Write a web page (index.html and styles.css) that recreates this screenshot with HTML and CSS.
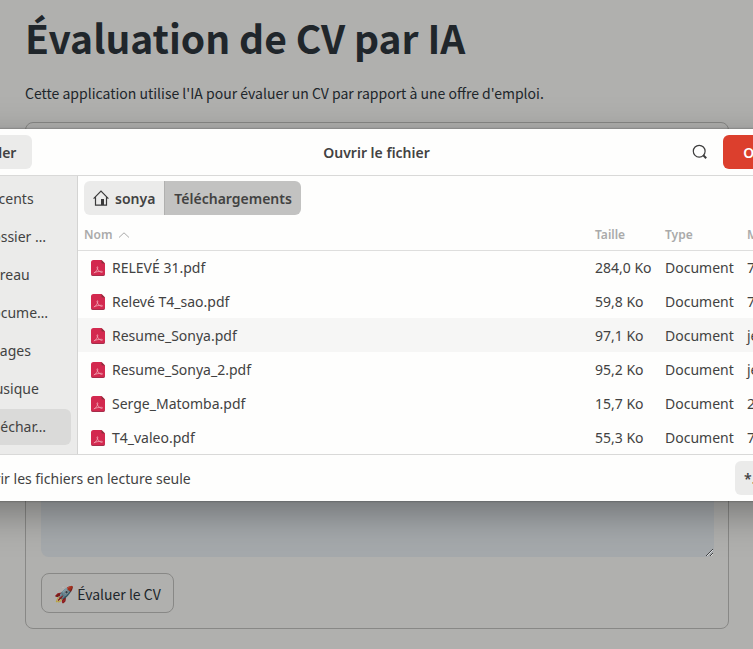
FILE: index.html
```
<!DOCTYPE html>
<html lang="fr">
<head>
<meta charset="utf-8">
<title>Évaluation de CV par IA</title>
<link rel="stylesheet" href="styles.css">
</head>
<body>
<main class="page">
  <h1 class="page-title">Évaluation de CV par IA</h1>
  <p class="intro">Cette application utilise l'IA pour évaluer un CV par rapport à une offre d'emploi.</p>
  <form class="cv-form">
    <textarea class="offer" aria-label="Offre d'emploi"></textarea>
    <button class="submit" type="button"><span class="rocket">🚀</span> Évaluer le CV</button>
  </form>
</main>

<section class="dialog" role="dialog" aria-labelledby="dialog-title">
  <header class="dialog-header">
    <button class="btn" type="button">Annuler</button>
    <h2 class="dialog-title" id="dialog-title">Ouvrir le fichier</h2>
    <div class="header-actions">
      <button class="search" type="button" aria-label="Rechercher">
        <svg width="16" height="16" viewBox="0 0 16 16" fill="none" stroke="#3d3d3d"><circle cx="7.2" cy="7.2" r="5.9" stroke-width="1.2"/><path d="M11.3 11.3 14.2 14.2" stroke-width="2"/></svg>
      </button>
      <button class="btn btn-open" type="button">Ouvrir</button>
    </div>
  </header>
  <div class="dialog-body">
    <nav class="places">
      <a class="place" href="#">Récents</a>
      <a class="place" href="#">Dossier …</a>
      <a class="place" href="#">Bureau</a>
      <a class="place" href="#">Docume…</a>
      <a class="place" href="#">Images</a>
      <a class="place" href="#">Musique</a>
      <a class="place place-current" href="#">Téléchar…</a>
    </nav>
    <div class="browser">
      <div class="path">
        <button class="crumb" type="button">
          <svg width="16" height="16" viewBox="0 0 16 16" fill="none" stroke="#3a3a3a" stroke-width="1.2"><path d="M.6 8.6 8 1.2l7.4 7.4M2.5 7.2v7.9h11V7.2"/><path d="M8 9h3v6H8z" fill="#3a3a3a" stroke="none"/></svg>
          sonya</button>
        <button class="crumb crumb-current" type="button">Téléchargements</button>
      </div>
      <table class="files">
        <thead>
          <tr><th class="name">Nom <svg class="sort" width="12" height="6" viewBox="0 0 12 6" fill="none" stroke="#aaa"><path d="M1 5.5 6 .8l5 4.7"/></svg></th><th class="size">Taille</th><th class="type">Type</th><th>Modifié</th></tr>
        </thead>
        <tbody>
          <tr><td class="name"><svg class="pdf" width="14" height="16" viewBox="0 0 14 16"><use href="#pdf"/></svg>RELEVÉ 31.pdf</td><td>284,0 Ko</td><td>Document</td><td>7</td></tr>
          <tr><td class="name"><svg class="pdf" width="14" height="16" viewBox="0 0 14 16"><use href="#pdf"/></svg>Relevé T4_sao.pdf</td><td>59,8 Ko</td><td>Document</td><td>7</td></tr>
          <tr class="hovered"><td class="name"><svg class="pdf" width="14" height="16" viewBox="0 0 14 16"><use href="#pdf"/></svg>Resume_Sonya.pdf</td><td>97,1 Ko</td><td>Document</td><td>jeu.</td></tr>
          <tr><td class="name"><svg class="pdf" width="14" height="16" viewBox="0 0 14 16"><use href="#pdf"/></svg>Resume_Sonya_2.pdf</td><td>95,2 Ko</td><td>Document</td><td>jeu.</td></tr>
          <tr><td class="name"><svg class="pdf" width="14" height="16" viewBox="0 0 14 16"><use href="#pdf"/></svg>Serge_Matomba.pdf</td><td>15,7 Ko</td><td>Document</td><td>2</td></tr>
          <tr><td class="name"><svg class="pdf" width="14" height="16" viewBox="0 0 14 16"><use href="#pdf"/></svg>T4_valeo.pdf</td><td>55,3 Ko</td><td>Document</td><td>7</td></tr>
        </tbody>
      </table>
    </div>
  </div>
  <footer class="dialog-footer">
    <label class="readonly"><input class="readonly-box" type="checkbox">Ouvrir les fichiers en lecture seule</label>
    <button class="btn btn-filter" type="button">*.pdf</button>
  </footer>
</section>

<svg class="symbols" width="0" height="0" aria-hidden="true">
  <symbol id="pdf" viewBox="0 0 14 16">
    <path d="M2.500 0h8L14 3.500V13.500a2.500 2.500 0 0 1-2.500 2.500h-9A2.500 2.500 0 0 1 0 13.500v-11A2.500 2.500 0 0 1 2.500 0z" fill="#d3294f"/>
    <path d="M10.500 0 14 3.500h-2.200a1.300 1.300 0 0 1-1.300-1.300z" fill="#8f2f3c"/>
    <path d="M0 13.200v.3A2.500 2.500 0 0 0 2.500 16h9a2.500 2.500 0 0 0 2.500-2.500v-.3a2.500 2.500 0 0 1-2.500 2h-9a2.500 2.500 0 0 1-2.500-2z" fill="#96304a"/>
    <path d="M2.800 13c1.800-.5 4-3.400 4-5.600 0-1-.9-.9-.8.1.2 2.100 2.600 4.600 4.600 4.900 1.300.1 1.200-1 0-1.100-2 0-5.600.5-7.300 1.300" fill="none" stroke="#f0a5b4" stroke-width=".8"/>
  </symbol>
</svg>
</body>
</html>
```

FILE: styles.css
```
* {
  box-sizing: border-box;
}

body {
  margin: 0;
  min-height: 100vh;
  overflow: hidden;
  position: relative;
  background: #b0b0ae;
  color: #20262b;
  font-family: "Noto Sans CJK SC", sans-serif;
}

button,
input,
textarea {
  font: inherit;
  color: inherit;
}

.page {
  padding: 9px 24px 20px 25px;
}

.page-title {
  margin: 0;
  font-size: 39px;
  line-height: 56px;
  font-weight: 700;
}

.intro {
  margin: 16px 0 17px;
  font-size: 14px;
  line-height: 24px;
}

.cv-form {
  display: flex;
  flex-direction: column;
  align-items: flex-start;
  gap: 16px;
  padding: 16px 14px 15px 15px;
  border: 1px solid #888886;
  border-radius: 8px;
}

.offer {
  width: 100%;
  height: 418px;
  border: 0;
  border-radius: 8px;
  background: #a5a9ac;
}

.submit {
  height: 40px;
  padding: 0 12px;
  border: 1px solid #888886;
  border-radius: 8px;
  background: transparent;
  font-size: 14px;
  line-height: 20px;
}

.rocket {
  font-size: 16px;
  filter: brightness(0.75);
}

.dialog {
  position: absolute;
  top: 129px;
  left: -60px;
  right: -60px;
  background: #fefefd;
  color: #424242;
  font-family: "Noto Sans", sans-serif;
  font-size: 14px;
  box-shadow: 0 12px 36px rgba(0, 0, 0, 0.34), 0 0 2px rgba(0, 0, 0, 0.4);
}

.dialog-header {
  display: grid;
  grid-template-columns: 1fr auto 1fr;
  align-items: center;
  height: 47px;
  padding: 0 6px;
  border-bottom: 1px solid #d9d9d8;
}

.dialog-title {
  margin: 0;
  font-size: 14px;
  font-weight: 600;
}

.btn {
  justify-self: start;
  height: 34px;
  width: 86px;
  padding: 0 16px;
  border: 0;
  border-radius: 6px;
  background: #ebebea;
  font-size: 14px;
  font-weight: 600;
}

.header-actions {
  display: flex;
  justify-content: flex-end;
  gap: 6px;
}

.search {
  display: grid;
  place-items: center;
  width: 34px;
  height: 34px;
  padding: 0;
  border: 0;
  background: transparent;
}

.btn-open {
  width: 84px;
  background: #dc3f2d;
  color: #fff;
}

.dialog-body {
  display: grid;
  grid-template-columns: 138px 1fr;
}

.places {
  display: flex;
  flex-direction: column;
  gap: 2px;
  padding: 5px 6px;
  background: #ebebea;
  border-right: 1px solid #d4d4d3;
}

.place {
  height: 36px;
  padding-left: 36px;
  border-radius: 6px;
  line-height: 36px;
  color: inherit;
  text-decoration: none;
  white-space: nowrap;
}

.place-current {
  background: #dadad9;
}

.path {
  display: flex;
  padding: 5px 6px 4px;
}

.crumb {
  display: flex;
  align-items: center;
  gap: 6px;
  height: 34px;
  padding: 0 9px;
  border: 0;
  border-radius: 6px 0 0 6px;
  background: #ebebea;
  font-weight: 600;
}

.crumb-current {
  border-left: 1px solid #b0b0af;
  border-radius: 0 6px 6px 0;
  background: #c2c2c1;
}

.files {
  width: 100%;
  border-collapse: collapse;
  table-layout: fixed;
}

.files th,
.files td {
  height: 34px;
  padding: 0 6px;
  text-align: left;
  white-space: nowrap;
}

.files th {
  height: 31px;
  border-bottom: 1px solid #dededd;
  color: #aaa;
  font-size: 12px;
  font-weight: 600;
}

.files td.name {
  padding-left: 13px;
}

.size {
  width: 70px;
}

.type {
  width: 82px;
}

.files th:last-child {
  width: 72px;
}

.sort {
  margin-left: 2px;
  vertical-align: 1px;
}

.pdf {
  margin-right: 7px;
  vertical-align: -3px;
}

.hovered {
  background: #f6f6f5;
}

.dialog-footer {
  display: flex;
  align-items: center;
  justify-content: space-between;
  height: 47px;
  padding: 0 6px;
  border-top: 1px solid #d9d9d8;
}

.readonly {
  display: flex;
  align-items: center;
  gap: 9px;
}

.readonly-box {
  margin: 0;
}

.btn-filter {
  width: 72px;
  padding: 0 9px;
  text-align: left;
}

.symbols {
  position: absolute;
}
```
